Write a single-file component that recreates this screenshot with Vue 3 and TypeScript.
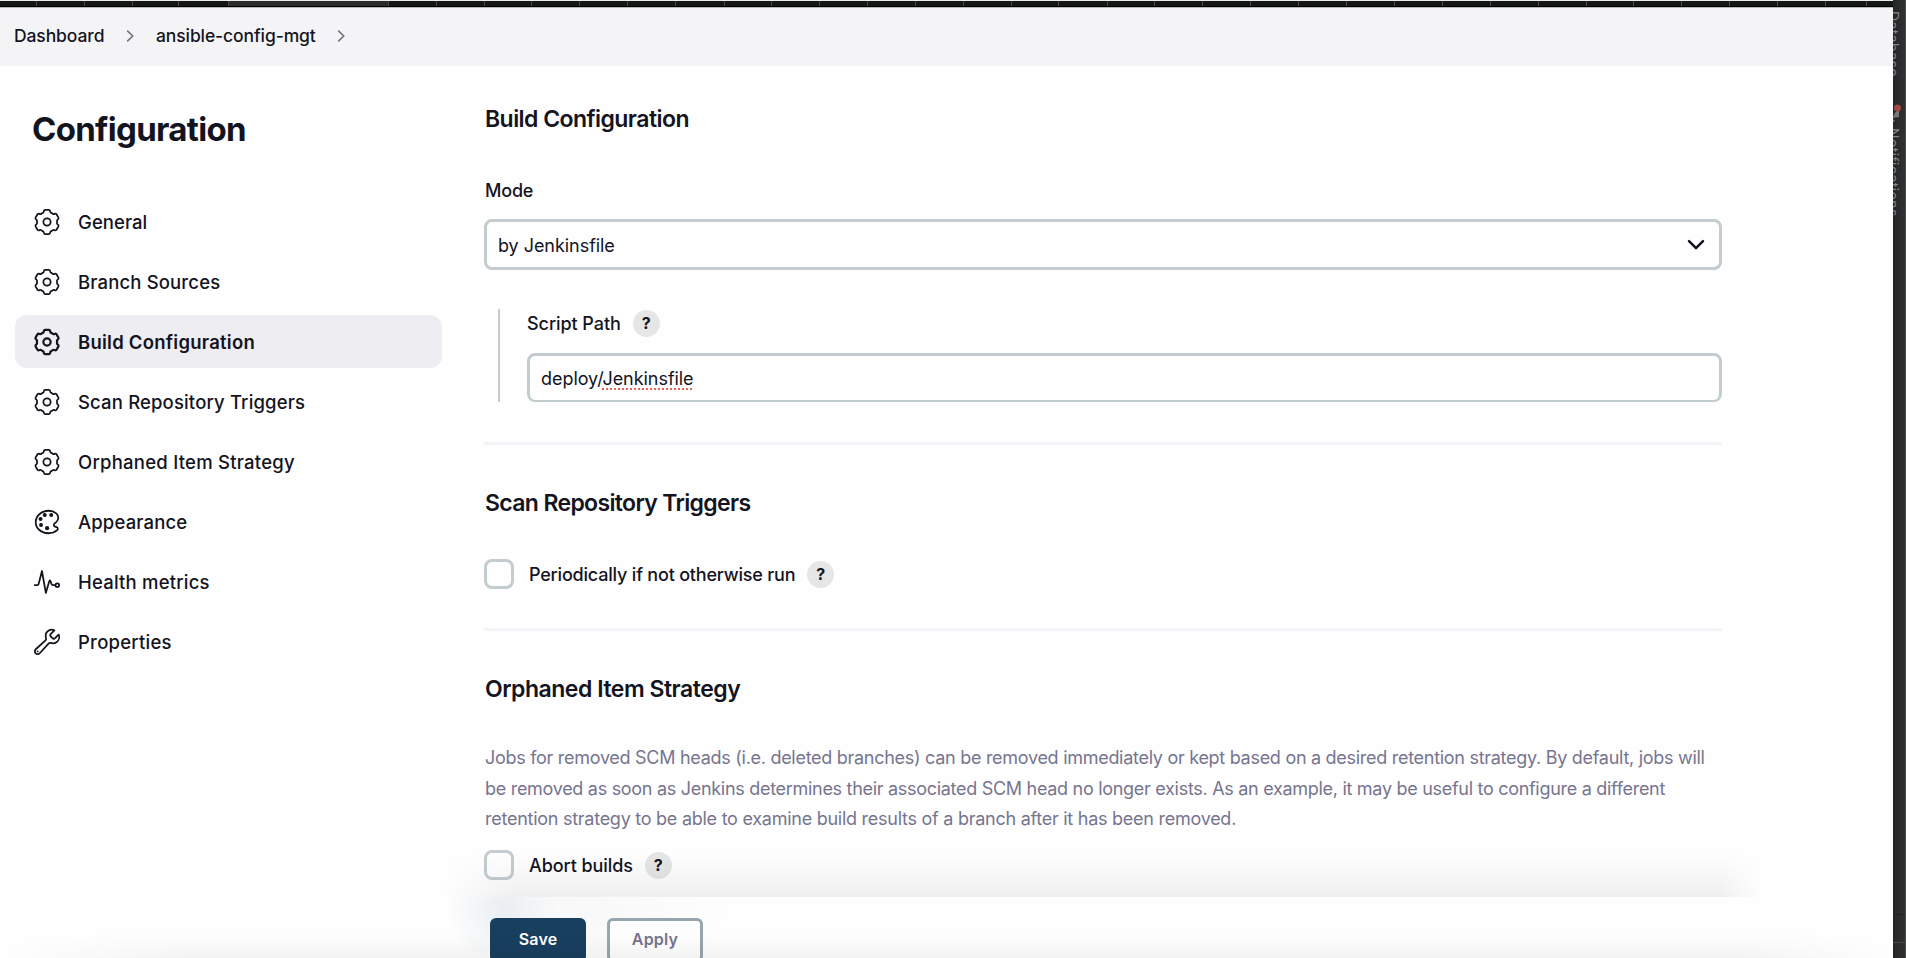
<script setup lang="ts">
type IconName = 'gear' | 'palette' | 'pulse' | 'wrench'

interface Task {
  label: string
  icon: IconName
  cls: string
  active?: boolean
}

const tasks: Task[] = [
  { label: 'General', icon: 'gear', cls: 't-general' },
  { label: 'Branch Sources', icon: 'gear', cls: 't-branch' },
  { label: 'Build Configuration', icon: 'gear', cls: 't-build', active: true },
  { label: 'Scan Repository Triggers', icon: 'gear', cls: 't-scan' },
  { label: 'Orphaned Item Strategy', icon: 'gear', cls: 't-orphan' },
  { label: 'Appearance', icon: 'palette', cls: 't-appear' },
  { label: 'Health metrics', icon: 'pulse', cls: 't-health' },
  { label: 'Properties', icon: 'wrench', cls: 't-props' },
]

const ticks: number[] = [36, 84, 132, 178, 228, 388, 436, 484, 531, 579, 627, 675, 724, 771, 819, 867, 915, 963, 1011, 1058, 1107, 1154, 1202, 1250, 1298, 1346, 1394, 1442, 1490, 1538, 1586, 1633, 1681, 1729, 1777, 1825, 1866]

// Six-toothed gear outline centred in the 512 unit icon box.
function gearPath(): string {
  const at = (r: number, deg: number): string => {
    const a = ((deg - 90) * Math.PI) / 180
    return `${(256 + r * Math.cos(a)).toFixed(1)} ${(256 + r * Math.sin(a)).toFixed(1)}`
  }
  let d = ''
  for (let i = 0; i < 6; i++) {
    const t = i * 60
    d += `${i === 0 ? 'M' : 'L'}${at(209, t - 9)}`
    d += `L${at(209, t + 9)}Q${at(210, t + 15)} ${at(189, t + 17)}`
    d += `Q${at(168, t + 19)} ${at(171, t + 25)}`
    d += `Q${at(173, t + 30)} ${at(171, t + 35)}`
    d += `Q${at(168, t + 41)} ${at(189, t + 43)}`
    d += `Q${at(210, t + 45)} ${at(209, t + 51)}`
  }
  return d + 'Z'
}
const gear = gearPath()
</script>

<template>
  <div class="screen">
    <div class="browser">
      <svg class="tabs" width="1893" height="8" viewBox="0 0 1893 8">
        <rect width="1893" height="8" fill="#151716" />
        <rect x="228" width="160" height="8" fill="#2c2c2c" />
        <rect v-for="x in ticks" :key="x" :x="x" width="1" height="6" fill="#4a4a4a" />
        <rect width="1893" height="1" fill="#ececec" />
        <rect y="6" width="1893" height="1" fill="#000" />
        <rect y="7" width="1893" height="1" fill="#b9bbb9" />
      </svg>
      <nav class="crumbs">
        <span class="c1">Dashboard</span>
        <svg class="sep" width="8" height="14" viewBox="0 0 8 14"><path d="M1.2 1.6 6.7 7 1.2 12.4" /></svg>
        <span class="c2">ansible-config-mgt</span>
        <svg class="sep" width="8" height="14" viewBox="0 0 8 14"><path d="M1.2 1.6 6.7 7 1.2 12.4" /></svg>
      </nav>
      <div class="body">
        <aside>
          <h1>Configuration</h1>
          <div class="tasks">
            <a v-for="t in tasks" :key="t.label" class="task" :class="{ active: t.active }">
              <svg class="ico" width="30" height="30" viewBox="0 0 512 512">
                <template v-if="t.icon === 'gear'">
                  <path :d="gear" />
                  <circle cx="256" cy="256" r="62" />
                </template>
                <template v-else-if="t.icon === 'palette'">
                  <path d="M430.1 347.9c-6.6-6.1-16.3-7.6-24.6-9-11.500-1.900-15.900-4-22.600-10-14.300-12.700-14.300-31.100 0-43.800l30.300-26.900c46.400-41 46.400-108.200 0-149.200-34.200-30.100-80.100-45-127.800-45-55.700 0-113.900 20.300-158.800 60.100-83.500 73.800-83.500 194.700 0 268.500 41.500 36.700 97.500 55 152.900 55.400h1.700c55.400 0 110-17.900 148.800-52.400 14.400-12.700 12-36.600.100-47.700z" />
                  <g class="dots"><circle cx="146" cy="206" r="34" /><circle cx="154" cy="308" r="34" /><circle cx="218" cy="136" r="34" /><circle cx="258" cy="362" r="36" /><circle cx="328" cy="136" r="34" /></g>
                </template>
                <template v-else-if="t.icon === 'pulse'">
                  <path d="M48 310h44c12 0 18-7 20-17L170 68l66 374 56-192c9-28 18-28 26 0l14 39c5 15 10 21 25 21h40" />
                  <circle cx="432" cy="310" r="31" />
                </template>
                <template v-else>
                  <path d="M393.870 190a32.100 32.100 0 0 1-45.250 0l-26.570-26.570a32.090 32.090 0 0 1 0-45.260L382.190 58a1 1 0 0 0-.3-1.640c-38.820-16.640-89.150-8.160-121.110 23.570-30.580 30.350-32.320 76-21.120 115.840a31.930 31.930 0 0 1-9.060 32.080L64 380a48.170 48.170 0 1 0 68 68l153.860-167a31.930 31.930 0 0 1 31.600-9.130c39.540 10.590 84.540 8.600 114.720-21.190 32.490-32 39.500-88.560 23.750-120.930a1 1 0 0 0-1.600-.26z" />
                  <circle class="pin" cx="96" cy="416" r="16" />
                </template>
              </svg>
              <span :class="t.cls">{{ t.label }}</span>
            </a>
          </div>
        </aside>
        <main>
          <section class="build">
            <h2 class="h-build">Build Configuration</h2>
            <label class="mode">Mode</label>
            <div class="select">
              <span>by Jenkinsfile</span>
              <svg width="18" height="12" viewBox="0 0 18 12"><path d="M2 2.200 9 9.200 16 2.200" /></svg>
            </div>
            <div class="nested">
              <div class="row"><span class="script">Script Path</span><i class="help">?</i></div>
              <div class="input"><span>deploy/<u>Jenkinsfile</u></span></div>
            </div>
          </section>
          <section class="scan">
            <h2 class="h-scan">Scan Repository Triggers</h2>
            <div class="row check"><b class="box"></b><span class="period">Periodically if not otherwise run</span><i class="help">?</i></div>
          </section>
          <section class="orphan">
            <h2 class="h-orphan">Orphaned Item Strategy</h2>
            <p>
              <span class="l1">Jobs for removed SCM heads (i.e. deleted branches) can be removed immediately or kept based on a desired retention strategy. By default, jobs will</span>
              <span class="l2">be removed as soon as Jenkins determines their associated SCM head no longer exists. As an example, it may be useful to configure a different</span>
              <span class="l3">retention strategy to be able to examine build results of a branch after it has been removed.</span>
            </p>
            <div class="row check"><b class="box"></b><span class="abort">Abort builds</span><i class="help">?</i></div>
          </section>
        </main>
      </div>
      <div class="shade"></div>
      <div class="actions">
        <button class="save">Save</button>
        <button class="apply">Apply</button>
      </div>
      <div class="fade"></div>
    </div>
    <div class="side">
      <svg class="bell" width="9" height="20" viewBox="0 0 9 20"><path d="M0 14C1 9 3 7 6 6v7zM0 15l2 2-2 1z" fill="#777" /><circle cx="4.500" cy="4" r="3.500" fill="#a04741" /></svg>
      <span class="db">Database</span>
      <span class="notif">Notifications</span>
    </div>
  </div>
</template>

<style>
html, body { margin: 0; overflow: hidden; }
</style>

<style scoped>
* { box-sizing: border-box; }
.screen { display: flex; width: 1906px; height: 958px; overflow: hidden; background: #fefefe; font-family: Inter, "Noto Sans", sans-serif; color: #14141f; white-space: nowrap; }
.browser { position: relative; width: 1893px; height: 958px; overflow: hidden; }
.tabs { display: block; }
.crumbs { display: flex; align-items: center; height: 58px; padding: 0 0 3px 14px; background: #f4f4f7; font-size: 17.500px; font-weight: 500; }
.c1 { width: 112px; letter-spacing: -.1px; }
.c2 { width: 181px; letter-spacing: -.1px; }
.sep { margin-right: 22px; fill: none; stroke: #77777f; stroke-width: 1.700; }
.body { display: flex; }
aside { width: 484px; padding: 43px 42px 0 15px; }
h1 { margin: 0 0 46px 17px; line-height: 40px; font-size: 33px; font-weight: 700; letter-spacing: -.7px; }
.task { display: flex; align-items: center; height: 53px; margin-bottom: 7px; padding-left: 17px; border-radius: 12px; font-size: 18.500px; font-weight: 500; letter-spacing: .15px; }
.task.active { background: #eeedf2; font-weight: 600; }
.t-general { letter-spacing: .05px; }
.t-build, .t-orphan, .t-props { letter-spacing: .24px; }
.t-health { letter-spacing: .2px; }
.ico { margin-right: 16px; fill: none; stroke: #14141f; stroke-width: 30; stroke-linejoin: round; stroke-linecap: round; }
.active .ico { stroke-width: 38; }
.dots, .pin { fill: #14141f; stroke: none; }
main { width: 1238px; padding-top: 38px; }
section { border-bottom: 3px solid #f3f3f8; }
h2 { margin: 0; padding-left: 1px; line-height: 30px; font-size: 23px; font-weight: 600; letter-spacing: -.55px; }
.h-scan { letter-spacing: -.65px; }
.h-orphan { letter-spacing: -.48px; }
.build { height: 341px; }
.mode { display: block; margin-top: 45px; padding-left: 1px; line-height: 24px; font-size: 18px; font-weight: 500; letter-spacing: -.2px; }
.select { display: flex; align-items: center; justify-content: space-between; height: 51px; margin-top: 16px; padding: 1px 14px 0 11px; border: 3px solid #c3cccf; border-radius: 8px; font-size: 18px; letter-spacing: -.05px; }
.select svg { fill: none; stroke: #14141f; stroke-width: 2.500; stroke-linecap: round; stroke-linejoin: round; }
.nested { height: 93px; margin: 39px 0 0 14px; padding-left: 27px; border-left: 2px solid #c3cccf; }
.row { display: flex; align-items: center; height: 28px; font-size: 18px; font-weight: 500; }
.script { letter-spacing: -.06px; }
.help { display: flex; align-items: center; justify-content: center; width: 27px; height: 27px; margin-left: 12px; border-radius: 50%; background: #e6e6e6; font-size: 16px; font-style: normal; font-weight: 700; }
.input { display: flex; align-items: center; height: 49px; margin-top: 16px; padding-left: 11px; border: 3px solid #c3cccf; border-bottom-width: 2px; border-radius: 8px; font-size: 18px; letter-spacing: -.05px; }
u { text-decoration: underline dotted #f0605a 1.500px; text-underline-offset: 4px; text-decoration-skip-ink: none; }
.scan { height: 186px; padding-top: 43px; }
.check { height: 30px; }
.scan .check { margin-top: 41px; }
.box { width: 30px; height: 30px; margin-right: 15px; border: 3px solid #c3cccf; border-radius: 8px; }
.period { letter-spacing: -.2px; }
.abort { letter-spacing: -.08px; }
.orphan { padding-top: 43px; border: 0; }
p { margin: 39px 0 15px; padding-left: 1px; line-height: 30.700px; font-size: 18px; color: #76758f; }
p span { display: block; letter-spacing: -.285px; }
p .l2 { letter-spacing: -.295px; }
p .l3 { letter-spacing: -.26px; }
.shade { position: absolute; left: 430px; top: 840px; width: 1345px; height: 57px; background: linear-gradient(to bottom, rgba(0,0,0,0) 20%, rgba(0,0,0,.055)); mask-image: linear-gradient(to right, transparent 1%, #000 6%, #000 96%, transparent 99%); }
.actions { position: absolute; left: 430px; top: 897px; width: 1463px; height: 61px; display: flex; padding: 21px 0 0 60px; background: radial-gradient(ellipse 56px 60px at 73px 12px, rgba(60,100,145,.09), transparent), radial-gradient(ellipse 150px 70px at 155px 15px, rgba(0,0,0,.025), transparent), #fefefe; }
button { height: 44px; border-radius: 6px; font: 600 16px Inter, sans-serif; letter-spacing: .2px; padding: 0 0 3px; }
.save { width: 96px; border: 0; color: #fff; background: #193f5f; }
.apply { width: 96px; margin-left: 21px; border: 3px solid #97a6ac; color: #76758f; background: #fefefe; }
.fade { position: absolute; left: 0; bottom: 0; width: 1893px; height: 24px; background: linear-gradient(to bottom, rgba(0,0,0,0), rgba(0,0,0,.045)); mask-image: linear-gradient(to right, transparent, #000 10%, #000 92%, transparent); }
.side { position: relative; width: 13px; height: 958px; overflow: hidden; border-right: 1px solid #4b4c4c; background: linear-gradient(#1f2021, #1f2021) 0 914px / 13px 1px no-repeat, linear-gradient(#454748, #454748) 0 942px / 13px 1px no-repeat, linear-gradient(to right, #242526, #303233); color: #858585; font-size: 14px; line-height: 14px; }
.side span { position: absolute; right: 5px; writing-mode: vertical-rl; letter-spacing: .4px; }
.db { top: 11px; }
.notif { top: 128px; }
.bell { position: absolute; left: 0; top: 104px; }
</style>
